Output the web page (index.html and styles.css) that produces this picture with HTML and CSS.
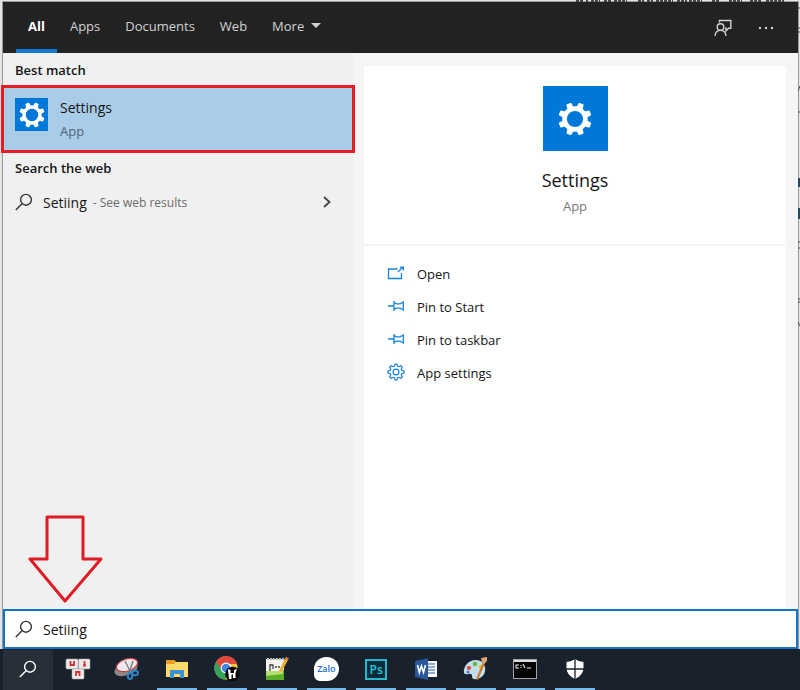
FILE: index.html
```html
<!DOCTYPE html>
<html lang="en">
<head>
<meta charset="utf-8">
<title>Windows Search</title>
<link rel="stylesheet" href="styles.css">
</head>
<body>
<svg class="defs" aria-hidden="true">
  <symbol id="gear" viewBox="0 0 34 34">
    <g fill="currentColor">
      <path id="tooth" d="M13.6 7 L14.3 1.2 Q14.4 .4 15.2 .4 H18.8 Q19.6 .4 19.7 1.2 L20.4 7Z" transform="rotate(22.5 17 17)"/>
      <use href="#tooth" transform="rotate(45 17 17)"/>
      <use href="#tooth" transform="rotate(90 17 17)"/>
      <use href="#tooth" transform="rotate(135 17 17)"/>
      <use href="#tooth" transform="rotate(180 17 17)"/>
      <use href="#tooth" transform="rotate(225 17 17)"/>
      <use href="#tooth" transform="rotate(270 17 17)"/>
      <use href="#tooth" transform="rotate(315 17 17)"/>
    </g>
    <circle cx="17" cy="17" r="10.4" fill="none" stroke="currentColor" stroke-width="4.6"/>
  </symbol>
  <symbol id="lens" viewBox="0 0 18 18">
    <g fill="none" stroke="currentColor" stroke-width="1.4"><circle cx="11" cy="6.8" r="5.4"/><path d="M7.1 10.7 L.8 17"/></g>
  </symbol>
  <symbol id="pin" viewBox="0 0 18 12">
    <path d="M1 6H7M7 1V11M7 2.6L9.5 3.8H13L16.3 2V10L13 8.2H9.5L7 9.4" fill="none" stroke="currentColor" stroke-width="1.3"/>
  </symbol>
</svg>

<div class="desktop">
  <svg class="page-top" viewBox="0 0 220 2" aria-hidden="true"><path d="M0 1H7M10 1H12M15 1H24M28 1H35M38 1H51M62 1H68M71 1H77M80 1H97M101 1H111M113 1H126M136 1H144M153 1H166M174 1H185M190 1H208" stroke="#444" stroke-width="2" stroke-dasharray="3 1"/></svg>
  <svg class="page-side" viewBox="0 0 2 340" aria-hidden="true"><path d="M0 8H2M0 28H2M0 32H2M0 91L2 86M0 112H2M0 242H2M0 248H2M0 299H2M0 302H2M0 322L2 326" stroke="#444"/><path d="M1 178V187M1 208V219" stroke="#234b60" stroke-width="2"/></svg>
  <main class="window">
    <header class="topbar">
      <nav class="tabs">
        <button class="tab active">All</button>
        <button class="tab">Apps</button>
        <button class="tab">Documents</button>
        <button class="tab">Web</button>
        <button class="tab">More <svg class="caret" viewBox="0 0 10 5"><path d="M0 0H10L5 5Z" fill="currentColor"/></svg></button>
      </nav>
      <div class="tools">
        <button class="tool" aria-label="Feedback"><svg width="18" height="18" viewBox="0 0 18 18" fill="none" stroke="currentColor" stroke-width="1.4"><path d="M5.5 3.5V1.5H16.8V9.3H14.6L12 11.8V9.3H11"/><circle cx="6.5" cy="8" r="3.3"/><path d="M1 17Q1.5 11.4 6.5 11.4Q11.5 11.4 12 17"/></svg></button>
        <button class="tool" aria-label="Options"><svg width="16" height="4" viewBox="0 0 16 4" fill="currentColor"><circle cx="2" cy="2" r="1.2"/><circle cx="8" cy="2" r="1.2"/><circle cx="14" cy="2" r="1.2"/></svg></button>
      </div>
    </header>

    <div class="content">
      <section class="results">
        <h2>Best match</h2>
        <button class="best">
          <span class="tile small"><svg><use href="#gear"/></svg></span>
          <span class="best-text"><span class="name">Settings</span><span class="kind">App</span></span>
        </button>
        <h2>Search the web</h2>
        <button class="web">
          <svg class="lens"><use href="#lens"/></svg>
          <span class="query">Setiing</span>
          <span class="hint">- See web results</span>
          <svg class="chevron" viewBox="0 0 8 12"><path d="M1 1L6.5 6L1 11" fill="none" stroke="currentColor" stroke-width="1.8"/></svg>
        </button>
        <svg class="arrow" viewBox="0 0 76 88" aria-hidden="true"><path d="M19 2H55V44H73L37 86L2 44H19Z" fill="none" stroke="#e01b24" stroke-width="3" stroke-linejoin="round"/></svg>
      </section>

      <section class="detail">
        <div class="hero">
          <span class="tile large"><svg><use href="#gear"/></svg></span>
          <h1>Settings</h1>
          <p>App</p>
        </div>
        <div class="actions">
          <button class="action"><svg width="18" height="14" viewBox="0 0 18 14" fill="none" stroke="currentColor" stroke-width="1.3"><path d="M10.5 3H1.5V12.5H14.5V7M11 6L16 1M13 1.2H16.3V4.4"/></svg>Open</button>
          <button class="action"><svg width="18" height="12"><use href="#pin"/></svg>Pin to Start</button>
          <button class="action"><svg width="18" height="12"><use href="#pin"/></svg>Pin to taskbar</button>
          <button class="action"><svg width="18" height="18" viewBox="0 0 18 18" fill="none" stroke="currentColor" stroke-width="1.2"><circle cx="9" cy="9" r="2.9"/><path d="M7.7 3L8 1H10L10.3 3L12 3.7L13.7 2.6L15.3 4.2L14.3 6L15 7.7L17 8V10L15 10.3L14.3 12L15.4 13.7L13.8 15.4L12 14.3L10.3 15L10 17H8L7.7 15L6 14.3L4.3 15.4L2.6 13.8L3.7 12L3 10.3L1 10V8L3 7.7L3.7 6L2.6 4.3L4.2 2.6L6 3.7Z"/></svg>App settings</button>
        </div>
      </section>
    </div>

    <label class="searchbox">
      <svg class="lens"><use href="#lens"/></svg>
      <input type="text" value="Setiing" aria-label="Search">
    </label>
  </main>

  <footer class="taskbar">
    <div class="tasks">
    <button class="task current" aria-label="Search"><svg width="18" height="18"><use href="#lens"/></svg></button>
    <button class="task" aria-label="Unikey">
      <svg width="26" height="22" viewBox="0 0 26 22"><g fill="#eee9e7" stroke="#aaa" stroke-width=".6"><rect x="1" y="1" width="12" height="10" rx="1"/><rect x="13.5" y="1" width="11.5" height="10" rx="1"/><rect x="7" y="11" width="12" height="10" rx="1"/></g><g fill="none" stroke="#d52f37" stroke-width="1.8"><path d="M5.5 3V7H9V3M18 7.5H21M19.5 3V7.5M11 18V14H14.5V18"/></g></svg></button>
    <button class="task" aria-label="Snipping Tool">
      <svg width="26" height="24" viewBox="0 0 26 24"><ellipse cx="12" cy="12" rx="12" ry="6.4" fill="#8d8785" transform="rotate(-18 12 12)"/><ellipse cx="13" cy="8" rx="11" ry="6" fill="#eee9e9" stroke="#bf3c43" stroke-width="1.2" transform="rotate(-18 13 8)"/><path d="M11 4L17 16M19 4L15 16" stroke="#777f89" stroke-width="1.4"/><g fill="none" stroke="#2b83c5" stroke-width="2"><ellipse cx="16" cy="19" rx="2.2" ry="3"/><ellipse cx="21" cy="16" rx="3" ry="2.2"/></g></svg></button>
    <button class="task open" aria-label="File Explorer">
      <svg width="24" height="20" viewBox="0 0 24 20"><path d="M1 1H9L11 3H23V18H1Z" fill="#ffd968"/><path d="M1 1H9L11 3L9 5H1Z" fill="#e7a020"/><path d="M5 11H19V19H15V15H9V19H5Z" fill="#3993d8"/></svg></button>
    <button class="task open" aria-label="Chrome">
      <svg width="26" height="26" viewBox="0 0 26 26"><circle cx="12" cy="12" r="11.5" fill="#f3c83c"/><path d="M12 12L2 6A11.5 11.5 0 0 0 11 23.5L16 15Z" fill="#35a25a"/><path d="M2 6A11.5 11.5 0 0 1 23 8H12L7 13Z" fill="#df4a3f"/><circle cx="12" cy="12" r="5.4" fill="#fff"/><circle cx="12" cy="12" r="4.3" fill="#4386df"/><circle cx="18.5" cy="18" r="7.3" fill="#080808"/><path d="M14 13L16.5 14V17H20V14L23 13L21.5 17V22H19V18.5H17.5V23H15Z" fill="#fff"/></svg></button>
    <button class="task open" aria-label="Notepad++">
      <svg width="24" height="26" viewBox="0 0 24 26"><path d="M1 3H19V24H1Z" fill="#f4f4ee"/><path d="M1 17L19 14V24H1Z" fill="#58ae25"/><path d="M1 15H18V18L1 20Z" fill="#b5e070"/><path d="M2 3H19" stroke="#b5b5b5" stroke-width="2" stroke-dasharray="2 1"/><path d="M5 8V15M5 9H8V13M10 11H12M13 11H15" fill="none" stroke="#444" stroke-width="1.3"/><path d="M14 17L15 13L20 2L23 4L17 15Z" fill="#f0ad35"/><path d="M20 2L21 1L24 2L23 4Z" fill="#d96d5b"/></svg></button>
    <button class="task open zalo" aria-label="Zalo"><span>Zalo</span></button>
    <button class="task open" aria-label="Photoshop"><span class="ps">Ps</span></button>
    <button class="task open" aria-label="Word">
      <svg width="24" height="22" viewBox="0 0 24 22"><path d="M12 3H23V19H12Z" fill="#f5f7fa"/><path d="M14 6H21M14 9H21M14 12H21M14 15H21" stroke="#335f9e" stroke-width="1.2"/><path d="M1 3L14 0V22L1 19Z" fill="#2b579a"/><path d="M3.5 7L5.3 14.5L7.4 8L9.5 14.5L11.5 7" fill="none" stroke="#fff" stroke-width="1.6"/></svg></button>
    <button class="task open" aria-label="Paint">
      <svg width="26" height="26" viewBox="0 0 26 26"><path d="M13 4C5 4 0 11 1 17Q2 19 6 18Q9 17 9 20Q9 24 14 23C21 22 23 15 22 11Q20 4 13 4Z" fill="#c4deec"/><circle cx="12" cy="8" r="2.3" fill="#67b645"/><circle cx="6" cy="12" r="2.1" fill="#e2443e"/><circle cx="5" cy="16" r="1.5" fill="#4774d0"/><circle cx="18" cy="11" r="2.2" fill="#edbd33"/><path d="M13 23L20 6L22 7L15 24Z" fill="#cc7b32"/><path d="M18 2L24 1L24 5L21 8L19 6Z" fill="#e2a571"/></svg></button>
    <button class="task open" aria-label="Command Prompt">
      <svg width="24" height="20" viewBox="0 0 24 20"><rect x=".5" y=".5" width="23" height="19" fill="#050505" stroke="#a5a5a5"/><path d="M1 2H23" stroke="#ddd" stroke-width="2"/><path d="M6 6H3V9H6M8 6V7M8 8V9M10 5L12 9M14 9H18" fill="none" stroke="#eee" stroke-width="1.1"/></svg></button>
    <button class="task open" aria-label="Windows Security">
      <svg width="18" height="20" viewBox="0 0 18 20"><path d="M9 0Q13 3 17.5 3V9Q17.5 16 9 20Q.5 16 .5 9V3Q5 3 9 0Z" fill="#fff"/><path d="M9 0V20M0 10H18" stroke="#18212c" stroke-width="1.3"/></svg></button>
    </div>
  </footer>
</div>
</body>
</html>
```

FILE: styles.css
```css
* { box-sizing: border-box; }
body { margin: 0; font-family: "Open Sans", "Noto Sans", sans-serif; color: #151515; }
button { border: 0; padding: 0; background: none; font: inherit; color: inherit; text-align: left; }
h1, h2, p { margin: 0; }
svg { display: block; flex: none; }
.defs { position: absolute; width: 0; height: 0; }

.desktop { position: relative; display: flex; flex-direction: column; min-height: 100vh; background: #e4e4e4; }
.page-top { position: absolute; top: 0; right: 4px; width: 220px; height: 2px; }
.page-side { position: absolute; top: 0; right: 0; width: 2px; height: 340px; }
.window { flex: 1; display: flex; flex-direction: column; margin: 1px 1px 0 2px; border: 1px solid #999; border-bottom: 0; }

.topbar { display: flex; justify-content: space-between; height: 51px; padding: 0 24px 0 13px; background: #222; color: #d2d2d2; font-size: 13px; }
.tabs { display: flex; gap: 1px; }
.tab { display: flex; align-items: center; gap: 7px; padding: 0 12px; border-bottom: 4px solid transparent; }
.tab.active { border-color: #1079d4; color: #fff; font-weight: 700; }
.caret { width: 10px; height: 5px; }
.tools { display: flex; align-items: center; gap: 26px; }

.content { flex: 1; display: grid; grid-template-columns: 350fr 445fr; background: #f5f5f5; }
.results { position: relative; background: #f0f0f0; }
.results h2 { height: 32px; padding-left: 12px; font-size: 13px; line-height: 34px; font-weight: 600; }
.best { position: relative; display: flex; gap: 12px; width: calc(100% + 4px); height: 68px; margin-left: -2px; padding: 10px 11px; border: 3px solid #e81c25; background: #a9cce8; }
.best + h2 { line-height: 30px; }
.tile { display: grid; place-items: center; flex: none; background: #0078da; color: #fff; }
.small { width: 33px; height: 33px; }
.small svg { width: 26px; height: 26px; }
.large { width: 65px; height: 65px; }
.large svg { width: 34px; height: 34px; }
.best-text { display: flex; flex-direction: column; gap: 4px; }
.name { font-size: 14px; line-height: 19px; }
.kind { font-size: 13px; line-height: 20px; color: #4e6478; }
.web { display: flex; align-items: center; width: 100%; height: 34px; padding: 0 22px 0 12px; }
.lens { width: 18px; height: 18px; margin-right: 10px; color: #333; }
.query { font-size: 14px; }
.hint { margin-left: 6px; font-size: 12px; color: #6c6c6c; }
.chevron { width: 8px; height: 12px; margin-left: auto; color: #444; }
.arrow { position: absolute; left: 25px; bottom: 6px; width: 76px; height: 88px; }

.detail { display: flex; flex-direction: column; gap: 2px; padding: 13px 12px 0 11px; }
.hero { display: flex; flex-direction: column; align-items: center; height: 178px; padding-top: 20px; background: #fff; text-align: center; }
.hero h1 { margin-top: 16px; font-size: 18px; line-height: 26px; font-weight: 400; }
.hero p { font-size: 13px; line-height: 26px; color: #777; }
.actions { flex: 1; display: flex; flex-direction: column; padding: 12px 23px; background: #fff; }
.action { display: grid; grid-template-columns: 30px 1fr; height: 33px; font-size: 13px; line-height: 32px; }
.action svg { align-self: center; margin-bottom: 4px; color: #1682dc; }

.searchbox { display: flex; align-items: center; height: 40px; padding: 0 10px; border: 2px solid #1274c4; background: #fff; }
.searchbox input { flex: 1; min-width: 0; padding: 0; border: 0; outline: 0; background: none; font: inherit; font-size: 14px; color: #151515; }

.taskbar { height: 41px; padding: 1px 0 0 3px; background: #18212c; color: #fff; }
.tasks { display: grid; grid-template-columns: repeat(12, minmax(0, 1fr)); max-width: 597px; height: 100%; }
.task { display: flex; align-items: center; justify-content: center; margin: 0 5px; border-bottom: 2px solid transparent; }
.task.current { margin: 0; background: #272f39; }
.task.open { border-color: #76b9ed; }
.zalo span { width: 25px; height: 24px; border-radius: 12px 12px 12px 6px; background: #fff; color: #176bdb; font-size: 9px; line-height: 23px; font-weight: 600; text-align: center; }
.ps { width: 22px; height: 21px; border: 2px solid #27b7cf; background: #082c39; color: #27c5df; font-size: 12px; line-height: 17px; font-weight: 600; text-align: center; }
```
